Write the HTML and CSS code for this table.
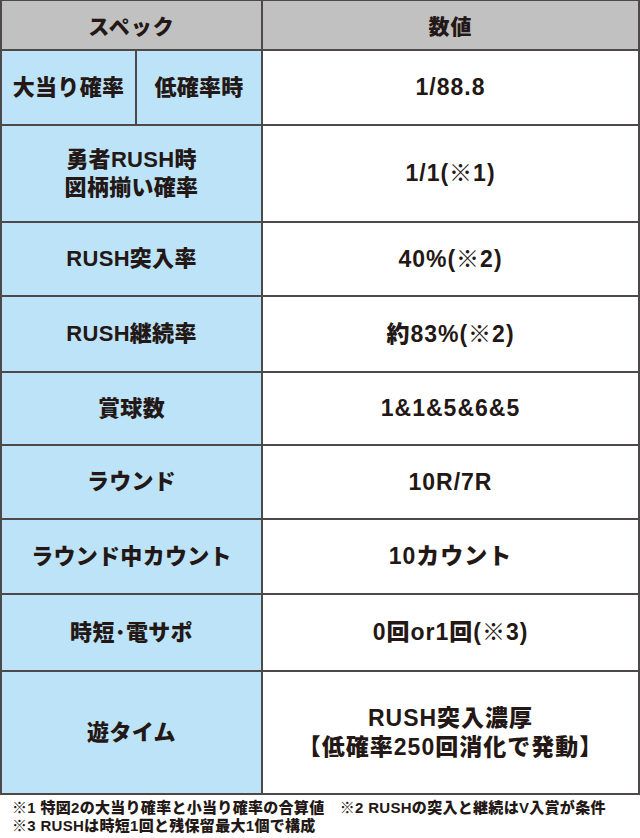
FILE: index.html
```html
<!DOCTYPE html>
<html lang="ja">
<head>
<meta charset="utf-8">
<title>スペック</title>
<link rel="stylesheet" href="styles.css">
</head>
<body>
<div class="spec">
  <div class="cell head span2">スペック</div>
  <div class="cell head">数値</div>

  <div class="cell label">大当り確率</div>
  <div class="cell label">低確率時</div>
  <div class="cell value">1/88.8</div>

  <div class="cell label span2">勇者RUSH時<br>図柄揃い確率</div>
  <div class="cell value">1/1(※1)</div>

  <div class="cell label span2">RUSH突入率</div>
  <div class="cell value">40%(※2)</div>

  <div class="cell label span2">RUSH継続率</div>
  <div class="cell value">約83%(※2)</div>

  <div class="cell label span2">賞球数</div>
  <div class="cell value">1&amp;1&amp;5&amp;6&amp;5</div>

  <div class="cell label span2">ラウンド</div>
  <div class="cell value">10R/7R</div>

  <div class="cell label span2">ラウンド中カウント</div>
  <div class="cell value">10カウント</div>

  <div class="cell label span2">時短･電サポ</div>
  <div class="cell value">0回or1回(※3)</div>

  <div class="cell label span2">遊タイム</div>
  <div class="cell value">RUSH突入濃厚<br>【低確率250回消化で発動】</div>
</div>
<div class="notes">
  <p>※1 特図2の大当り確率と小当り確率の合算値　※2 RUSHの突入と継続はV入賞が条件</p>
  <p>※3 RUSHは時短1回と残保留最大1個で構成</p>
</div>
</body>
</html>
```
FILE: styles.css
```css
html, body {
  margin: 0;
  padding: 0;
  background: #ffffff;
}

body {
  width: 640px;
  font-family: "Liberation Sans", "Noto Sans CJK JP", sans-serif;
  font-weight: 900;
  color: #231815;
}

.spec {
  display: grid;
  grid-template-columns: 133px 124px 375px;
  grid-template-rows: 48px 73px 95px 72px 74px 71px 72px 73px 75px 121px;
  gap: 2px;
  padding: 1px 2px 2px 2px;
  background: #4d4949;
  width: 636px;
}

.cell {
  display: flex;
  align-items: center;
  justify-content: center;
  text-align: center;
}

.span2 {
  grid-column: span 2;
}

.head {
  background: #c0c1c0;
  font-size: 21px;
  letter-spacing: 1px;
}

.label {
  background: #bde3f8;
  font-size: 22px;
  line-height: 28px;
  letter-spacing: 0.3px;
}

.value {
  background: #ffffff;
  font-size: 23px;
  line-height: 29px;
  letter-spacing: 1px;
}

.notes {
  padding: 4px 0 0 12px;
  font-size: 15px;
  line-height: 18px;
  letter-spacing: 0.3px;
}

.notes p {
  margin: 0;
}
```
